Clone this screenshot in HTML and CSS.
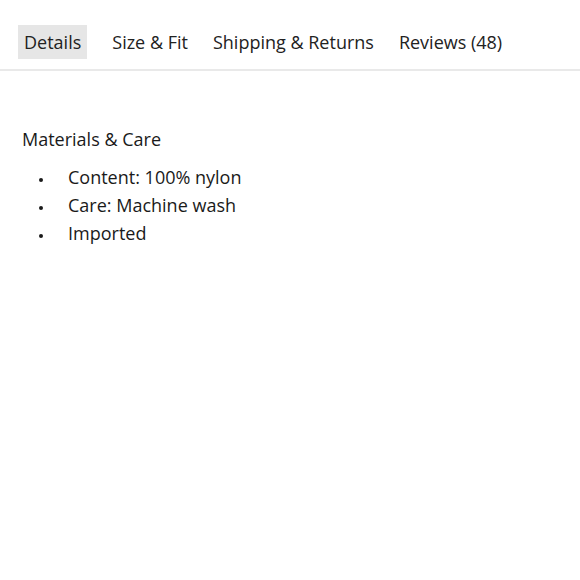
FILE: index.html
```html
<!DOCTYPE html>
<html>
<head>
<meta charset="utf-8">
<link rel="stylesheet" href="styles.css">
</head>
<body>
<nav class="tabs">
  <span class="tab active">Details</span>
  <span class="tab">Size &amp; Fit</span>
  <span class="tab">Shipping &amp; Returns</span>
  <span class="tab">Reviews (48)</span>
</nav>
<section class="panel">
  <h3 class="heading">Materials &amp; Care</h3>
  <ul class="list">
    <li>Content: 100% nylon</li>
    <li>Care: Machine wash</li>
    <li>Imported</li>
  </ul>
</section>
</body>
</html>
```
FILE: styles.css
```css
html, body {
  margin: 0;
  padding: 0;
  background: #fff;
}
body {
  font-family: "Open Sans", "Liberation Sans", sans-serif;
  color: #1a1a1a;
}
.tabs {
  display: flex;
  align-items: center;
  gap: 25px;
  padding: 25px 18px 10px;
  border-bottom: 2px solid #e9e9e9;
}
.tab {
  display: block;
  font-size: 18px;
  line-height: 34px;
  color: #222;
}
.tab.active {
  padding: 0 6px;
  background: #e6e6e6;
}
.panel {
  padding: 0 22px;
}
.heading {
  margin: 56px 0 0;
  font-size: 18px;
  font-weight: 400;
  line-height: 24px;
}
.list {
  list-style: none;
  margin: 12px 0 0;
  padding: 0;
  font-size: 18px;
  line-height: 28px;
}
.list li {
  display: flex;
  align-items: center;
}
.list li::before {
  content: "";
  flex: none;
  width: 4px;
  height: 4px;
  border-radius: 50%;
  background: #1a1a1a;
  margin: 5px 25px 0 17px;
}
```
